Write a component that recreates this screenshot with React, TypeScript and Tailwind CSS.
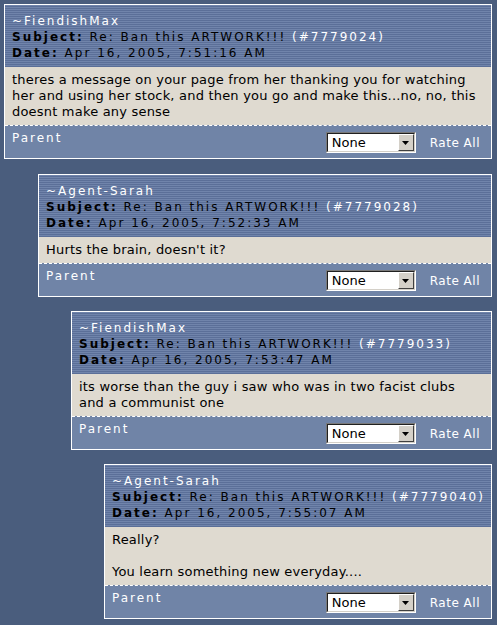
const comments = [
  {
    indent: 0,
    author: "FiendishMax",
    id: "7779024",
    date: "Apr 16, 2005, 7:51:16 AM",
    body: ["theres a message on your page from her thanking you for watching her and using her stock, and then you go and make this...no, no, this doesnt make any sense"],
  },
  {
    indent: 1,
    author: "Agent-Sarah",
    id: "7779028",
    date: "Apr 16, 2005, 7:52:33 AM",
    body: ["Hurts the brain, doesn't it?"],
  },
  {
    indent: 2,
    author: "FiendishMax",
    id: "7779033",
    date: "Apr 16, 2005, 7:53:47 AM",
    body: ["its worse than the guy i saw who was in two facist clubs and a communist one"],
  },
  {
    indent: 3,
    author: "Agent-Sarah",
    id: "7779040",
    date: "Apr 16, 2005, 7:55:07 AM",
    body: ["Really?", "", "You learn something new everyday...."],
  },
];

const indents = ["ml-0 mb-[1px]", "ml-[34px]", "ml-[67px]", "ml-[100px]"];

function FakeSelect() {
  return (
    <div className="flex h-[21px] w-[90px] border border-t-[#7a7a7a] border-l-[#7a7a7a] border-b-white border-r-white">
      <div className="flex flex-1 border border-t-[#202020] border-l-[#202020] border-b-[#d4d0c8] border-r-[#d4d0c8] bg-white">
        <span className="flex-1 pl-[4px] text-[13px] leading-[17px] text-black">None</span>
        <div className="flex w-[16px] items-center justify-center border border-t-white border-l-white border-b-[#404040] border-r-[#404040] bg-[#d4d0c8]">
          <svg width="7" height="4" viewBox="0 0 7 4">
            <path d="M0 0h7L3.5 4z" fill="#000" />
          </svg>
        </div>
      </div>
    </div>
  );
}

function Comment({ c }: { c: (typeof comments)[number] }) {
  return (
    <div className={`${indents[c.indent]} mr-[5px] border border-white`}>
      <div className="whitespace-nowrap bg-[image:repeating-linear-gradient(to_bottom,#7084ab_0px,#7084ab_1px,#5b6f98_1px,#5b6f98_2px)] px-[7px] pt-[8px] pb-[6px] text-[12px] leading-[16px] tracking-[2px]">
        <div className="text-white">~{c.author}</div>
        <div className="text-black">
          <b>Subject:</b> Re: Ban this ARTWORK!!! <span className="text-white">(#{c.id})</span>
        </div>
        <div className="text-black">
          <b>Date:</b> {c.date}
        </div>
      </div>
      <div className="bg-[#dfdad0] px-[7px] pt-[5px] pb-[5px] text-[13px] leading-[16px] tracking-[0.2px] text-black">
        {c.body.map((line, i) => (
          <div key={i}>{line || "\u00a0"}</div>
        ))}
      </div>
      <div className="flex h-[33px] items-start border-t border-dashed border-white bg-[#7084a7] pl-[7px] pr-[11px]">
        <div className="pt-[4px] text-[12px] leading-[16px] tracking-[2px] text-white">Parent</div>
        <div className="ml-auto flex items-center gap-[14px] pt-[6px]">
          <FakeSelect />
          <span className="text-[12px] tracking-[0.5px] text-white">Rate All</span>
        </div>
      </div>
    </div>
  );
}

export default function App() {
  return (
    <div className="flex min-h-[625px] w-[497px] flex-col gap-[14px] bg-[#4a5d7d] pt-[4px] pb-[5px] pl-[4px] font-['DejaVu_Sans',Verdana,sans-serif]">
      {comments.map((c) => (
        <Comment key={c.id} c={c} />
      ))}
    </div>
  );
}
